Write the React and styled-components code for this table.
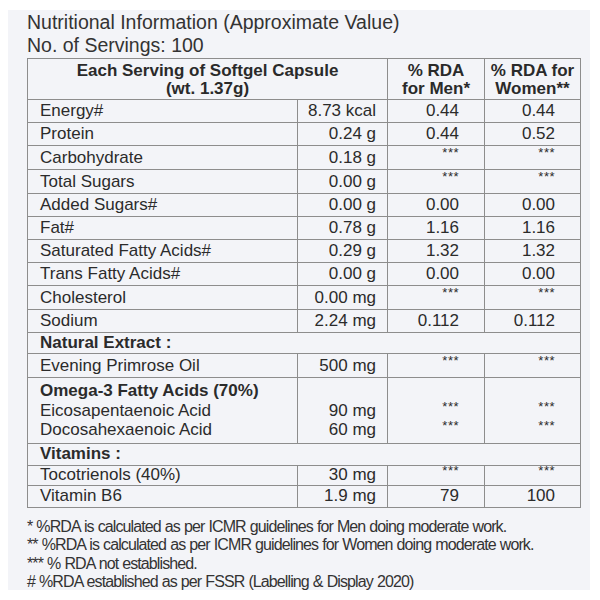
import styled, { createGlobalStyle } from "styled-components";

const GlobalStyle = createGlobalStyle`
  html, body { margin: 0; padding: 0; background: #ffffff; }
  body { font-family: "Liberation Sans", Arial, sans-serif; color: #2b2b2b; }
`;

const Page = styled.div`
  width: 600px;
  height: 600px;
  padding: 10px 10px 10px 8px;
  box-sizing: border-box;
`;

const Panel = styled.div`
  width: 582px;
  height: 580px;
  background: #f3f4f8;
  padding: 1px 10px 0 19px;
  box-sizing: border-box;
`;

const Title = styled.div`
  font-size: 19.5px;
  line-height: 23px;
  color: #333;
`;

const Table = styled.table`
  margin-top: 1px;
  width: 553px;
  border-collapse: collapse;
  table-layout: fixed;
  font-size: 17px;
`;

const Head = styled.th`
  border: 1px solid #8d8d8d;
  font-weight: bold;
  font-size: 17px;
  line-height: 18px;
  padding: 3px 2px 1px;
  text-align: center;
  vertical-align: top;
  color: #2a2a2a;
`;

const Cell = styled.td`
  border: 1px solid #8d8d8d;
  height: ${({ $h }) => $h || 18}px;
  line-height: 18px;
  padding: ${({ $pad }) => $pad ?? 2}px ${({ $right }) => ($right ? "25px" : "12px")} ${({ $pad }) => $pad ?? 2}px 12px;
  text-align: ${({ $right }) => ($right ? "right" : "left")};
  font-weight: ${({ $bold }) => ($bold ? "bold" : "normal")};
  vertical-align: ${({ $valign }) => $valign || "middle"};
  white-space: nowrap;
`;

const ValueCell = styled(Cell)`
  padding-right: 11px;
  padding-left: 2px;
`;

const Line = styled.div`
  height: 19.5px;
  line-height: 19.5px;
  font-weight: ${({ $bold }) => ($bold ? "bold" : "normal")};
`;

const Stars = styled.span`
  position: relative;
  top: -5px;
  font-size: 13px;
  letter-spacing: 0.5px;
`;

const Notes = styled.div`
  margin-top: 10px;
  font-size: 16px;
  line-height: 18.5px;
  letter-spacing: -0.9px;
  word-spacing: 0.5px;
  color: #333;
`;

const v = (x) => (x === "***" ? <Stars>***</Stars> : x);

const rows = [
  ["Energy#", "8.73 kcal", "0.44", "0.44"],
  ["Protein", "0.24 g", "0.44", "0.52"],
  ["Carbohydrate", "0.18 g", "***", "***"],
  ["Total Sugars", "0.00 g", "***", "***"],
  ["Added Sugars#", "0.00 g", "0.00", "0.00"],
  ["Fat#", "0.78 g", "1.16", "1.16"],
  ["Saturated Fatty Acids#", "0.29 g", "1.32", "1.32"],
  ["Trans Fatty Acids#", "0.00 g", "0.00", "0.00"],
  ["Cholesterol", "0.00 mg", "***", "***"],
  ["Sodium", "2.24 mg", "0.112", "0.112"],
];

const DataRow = ({ r, h, pad }) => (
  <tr>
    <Cell $h={h} $pad={pad}>{r[0]}</Cell>
    <ValueCell $right $h={h} $pad={pad}>{r[1]}</ValueCell>
    <Cell $right $h={h} $pad={pad}>{v(r[2])}</Cell>
    <Cell $right $h={h} $pad={pad}>{v(r[3])}</Cell>
  </tr>
);

export default function App() {
  return (
    <>
      <GlobalStyle />
      <Page>
        <Panel>
          <Title>Nutritional Information (Approximate Value)</Title>
          <Title>No. of Servings: 100</Title>
          <Table>
            <colgroup>
              <col style={{ width: 270 }} />
              <col style={{ width: 90 }} />
              <col style={{ width: 97 }} />
              <col style={{ width: 96 }} />
            </colgroup>
            <thead>
              <tr>
                <Head colSpan={2}>
                  Each Serving of Softgel Capsule
                  <br />
                  (wt. 1.37g)
                </Head>
                <Head>
                  % RDA
                  <br />
                  for Men*
                </Head>
                <Head>
                  % RDA for
                  <br />
                  Women**
                </Head>
              </tr>
            </thead>
            <tbody>
              {rows.map((r) => (
                <DataRow key={r[0]} r={r} />
              ))}
              <tr>
                <Cell colSpan={4} $bold $h={18} $pad={1}>Natural Extract :</Cell>
              </tr>
              <DataRow r={["Evening Primrose Oil", "500 mg", "***", "***"]} h={19} />
              <tr>
                <Cell $valign="top" $pad={3}>
                  <Line $bold>Omega-3 Fatty Acids (70%)</Line>
                  <Line>Eicosapentaenoic Acid</Line>
                  <Line>Docosahexaenoic Acid</Line>
                </Cell>
                <ValueCell $right $valign="top" $pad={3}>
                  <Line />
                  <Line>90 mg</Line>
                  <Line>60 mg</Line>
                </ValueCell>
                <Cell $right $valign="top" $pad={3}>
                  <Line />
                  <Line>{v("***")}</Line>
                  <Line>{v("***")}</Line>
                </Cell>
                <Cell $right $valign="top" $pad={3}>
                  <Line />
                  <Line>{v("***")}</Line>
                  <Line>{v("***")}</Line>
                </Cell>
              </tr>
              <tr>
                <Cell colSpan={4} $bold $h={19} $pad={1}>Vitamins :</Cell>
              </tr>
              <DataRow r={["Tocotrienols (40%)", "30 mg", "***", "***"]} h={16} pad={0} />
              <DataRow r={["Vitamin B6", "1.9 mg", "79", "100"]} h={19} pad={1} />
            </tbody>
          </Table>
          <Notes>
            <div>* %RDA is calculated as per ICMR guidelines for Men doing moderate work.</div>
            <div>** %RDA is calculated as per ICMR guidelines for Women doing moderate work.</div>
            <div>*** % RDA not established.</div>
            <div># %RDA established as per FSSR (Labelling &amp; Display 2020)</div>
          </Notes>
        </Panel>
      </Page>
    </>
  );
}
